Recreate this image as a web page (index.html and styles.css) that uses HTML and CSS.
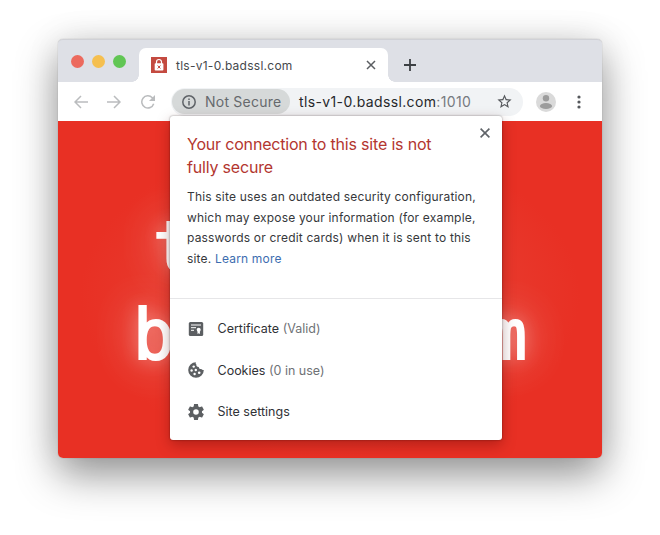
FILE: index.html
```html
<!DOCTYPE html>
<html lang="en">
<head>
<meta charset="utf-8">
<title>tls-v1-0.badssl.com</title>
<link rel="stylesheet" href="styles.css">
</head>
<body>
<div class="window">
  <div class="tabstrip">
    <div class="lights"><i class="red"></i><i class="yellow"></i><i class="green"></i></div>
    <div class="tab">
      <svg class="favicon" viewBox="0 0 16 16" width="16" height="16"><rect width="16" height="16" fill="#c44a40"/><path d="M5.5 7V5a2.5 2.5 0 0 1 5 0v2" fill="none" stroke="#fff" stroke-width="1.2"/><rect x="3.7" y="6.3" width="8.7" height="7.2" rx=".8" fill="#fff"/><path d="M6.7 8.5l2.7 3M9.4 8.5l-2.7 3" stroke="#c44a40" stroke-width="1"/></svg>
      <span class="tab-title">tls-v1-0.badssl.com</span>
      <svg class="tab-close" viewBox="0 0 10 10" width="10" height="10"><path d="M1 1l8 8M9 1L1 9" stroke="#5a5d61" stroke-width="1.5"/></svg>
    </div>
    <svg class="new-tab" viewBox="0 0 12 12" width="12" height="12"><path d="M6 0v12M0 6h12" stroke="#3c4043" stroke-width="1.8"/></svg>
  </div>
  <div class="toolbar">
    <svg class="back" viewBox="0 0 14 14" width="14" height="14"><path d="M14 7H1.3M7 1L1 7l6 6" fill="none" stroke="#babcbe" stroke-width="1.5"/></svg>
    <svg class="forward" viewBox="0 0 14 14" width="14" height="14"><path d="M0 7h12.700M7 1l6 6-6 6" fill="none" stroke="#babcbe" stroke-width="1.5"/></svg>
    <svg class="reload" viewBox="0 0 14 14" width="14" height="14"><path d="M12.700 8.800A6.100 6.100 0 1 1 11.300 2.700L12.500 4" fill="none" stroke="#babcbe" stroke-width="1.5"/><path d="M14 0v6H8z" fill="#babcbe"/></svg>
    <div class="omnibox">
      <div class="chip">
        <svg viewBox="0 0 14 14" width="14" height="14"><circle cx="7" cy="7" r="6.200" fill="none" stroke="#5f6368" stroke-width="1.500"/><path d="M7 6v4.500M7 3.400v1.600" stroke="#5f6368" stroke-width="1.500"/></svg>
        <span>Not Secure</span>
      </div>
      <span class="url">tls-v1-0.badssl.com<span class="port">:1010</span></span>
      <svg class="star" viewBox="0 0 24 24" width="17" height="17"><path fill="#55585c" d="M22 9.240l-7.190-.62L12 2 9.190 8.630 2 9.240l5.460 4.730L5.820 21 12 17.270 18.180 21l-1.630-7.030L22 9.240zM12 15.400l-3.760 2.270 1-4.280-3.320-2.880 4.380-.38L12 6.100l1.710 4.040 4.380.38-3.320 2.880 1 4.280L12 15.400z"/></svg>
    </div>
    <svg class="avatar" viewBox="0 0 20 20" width="20" height="20"><circle cx="10" cy="10" r="10" fill="#dadada"/><circle cx="10" cy="6.200" r="3.200" fill="#9c9c9c"/><ellipse cx="10" cy="14" rx="6.100" ry="3" fill="#9c9c9c"/></svg>
    <svg class="menu" viewBox="0 0 4 14" width="4" height="14"><g fill="#55585c"><circle cx="2" cy="2" r="1.600"/><circle cx="2" cy="7" r="1.600"/><circle cx="2" cy="12" r="1.600"/></g></svg>
  </div>
  <div class="page">
    <div class="headline first"><span>t</span></div>
    <div class="headline"><span>b</span><span>m</span></div>
  </div>

  <div class="popup">
    <svg class="popup-close" viewBox="0 0 10 10" width="10" height="10"><path d="M.6.6l8.800 8.800M9.400.6L.6 9.400" stroke="#5f6368" stroke-width="1.600"/></svg>
    <div class="summary">
      <h1>Your connection to this site is not<br>fully secure</h1>
      <p>This site uses an outdated security configuration,<br>which may expose your information (for example,<br>passwords or credit cards) when it is sent to this<br>site. <a>Learn more</a></p>
    </div>
    <div class="rows">
      <div class="row"><svg viewBox="0 0 16 16" width="16" height="16"><rect x=".8" y="1" width="14.400" height="14" rx="1.500" fill="#5c5f62"/><path d="M3 4h10M3 6.700h5M3 9.300h3" stroke="#fff" stroke-width="1"/><circle cx="10.700" cy="8.700" r="2" fill="#fff"/><path d="M9.500 9.500h2.400v3.600l-1.200-.9-1.200.9z" fill="#fff"/></svg><span>Certificate <em>(Valid)</em></span></div>
      <div class="row"><svg viewBox="0 0 16 16" width="16" height="16"><path d="M8 .2A7.800 7.800 0 1 0 15.800 8c-1 .3-2-.1-2.500-1-1.400.3-2.600-.7-2.500-2.100C9.200 5 8 3.800 8.400 2.400 7.600 1.900 7.500 1 8 .2z" fill="#5c5f62"/><g fill="#fff"><circle cx="5.700" cy="4.600" r="1.200"/><circle cx="3.600" cy="8.500" r="1.200"/><circle cx="7.800" cy="8" r="1.200"/><circle cx="6.600" cy="12" r="1.200"/><circle cx="11.200" cy="10.800" r="1.300"/></g></svg><span>Cookies <em>(0 in use)</em></span></div>
      <div class="row"><svg viewBox="2 2 20 20" width="16" height="16"><path fill="#5c5f62" d="M19.430 12.980c.04-.32.07-.64.07-.98s-.03-.66-.07-.98l2.110-1.650c.19-.15.24-.42.12-.64l-2-3.460c-.12-.22-.39-.3-.61-.22l-2.490 1c-.52-.4-1.080-.73-1.690-.98l-.38-2.650C14.460 2.180 14.250 2 14 2h-4c-.25 0-.46.18-.49.42l-.38 2.650c-.61.25-1.170.59-1.690.98l-2.490-1c-.23-.09-.49 0-.61.22l-2 3.460c-.13.22-.07.49.12.64l2.110 1.650c-.04.32-.07.65-.07.98s.03.66.07.98l-2.110 1.650c-.19.15-.24.42-.12.64l2 3.460c.12.22.39.3.61.22l2.490-1c.52.4 1.080.73 1.690.98l.38 2.650c.03.24.24.42.49.42h4c.25 0 .46-.18.49-.42l.38-2.650c.61-.25 1.170-.59 1.690-.98l2.490 1c.23.09.49 0 .61-.22l2-3.460c.12-.22.07-.49-.12-.64l-2.110-1.650zM12 15.500a3.500 3.500 0 1 1 0-7 3.500 3.500 0 0 1 0 7z"/></svg><span>Site settings</span></div>
    </div>
  </div>
</div>
</body>
</html>
```
FILE: styles.css
```css
* { box-sizing: border-box; }
body { margin: 0; height: 535px; overflow: hidden; background: #fff; font-family: Inter, sans-serif; padding: 39px 58px; }
svg { display: block; flex: none; }
.window { position: relative; width: 544px; height: 419px; border-radius: 5px; display: flex; flex-direction: column; box-shadow: 0 0 1px rgba(0,0,0,.4), 0 17px 42px rgba(0,0,0,.41), 0 0 36px rgba(0,0,0,.08); }
.tabstrip { height: 43px; flex: none; background: #dee0e6; border-radius: 5px 5px 0 0; border-top: 1px solid #d0d1d6; display: flex; align-items: flex-end; }
.lights { display: flex; gap: 8px; width: 81px; padding-left: 13px; align-self: center; }
.lights i { width: 13px; height: 13px; border-radius: 50%; }
.red { background: #ec6a5e; }
.yellow { background: #f5bf4f; }
.green { background: #61c654; }
.tab { position: relative; width: 249px; height: 34px; background: #fff; border-radius: 7px 7px 0 0; display: flex; align-items: center; padding: 0 12px; }
.tab::before, .tab::after { content: ""; position: absolute; bottom: 0; width: 7px; height: 7px; }
.tab::before { left: -7px; background: radial-gradient(circle at 0 0, transparent 6.500px, #fff 7px); }
.tab::after { right: -7px; background: radial-gradient(circle at 100% 0, transparent 6.500px, #fff 7px); }
.tab-title { margin-left: 9px; font-size: 12px; color: #45484c; letter-spacing: .26px; white-space: nowrap; }
.tab-close { margin-left: auto; }
.new-tab { margin: 0 0 11px 16px; }
.toolbar { height: 39px; flex: none; background: #fff; display: flex; align-items: center; padding-left: 16px; }
.forward { margin-left: 19px; }
.reload { margin-left: 19.500px; }
.omnibox { margin-left: 16.500px; width: 352px; height: 28px; border-radius: 14px; background: #f1f3f5; display: flex; align-items: center; }
.chip { margin-left: 1px; width: 118px; height: 25px; border-radius: 13px; background: #d6d9d9; display: flex; align-items: center; padding-left: 10px; gap: 9px; font-size: 14px; letter-spacing: .22px; color: #66696d; white-space: nowrap; }
.url { margin-left: 9px; font-size: 14px; letter-spacing: .37px; color: #26282b; white-space: nowrap; }
.port { color: #777a7f; }
.star { margin-left: auto; margin-right: 10px; }
.avatar { margin-left: 13px; }
.menu { margin-left: 21px; }
.page { flex: 1; overflow: hidden; background: radial-gradient(ellipse 250px 160px at 50% 52%, #e84b40 0, #e83b2e 60%, #e83024 100%); border-radius: 0 0 5px 5px; padding: 82px 75px 0; }
.headline { display: flex; justify-content: space-between; font: 69px/88px "DejaVu Sans Mono", monospace; -webkit-text-stroke: 2px #fff; color: #fff; text-shadow: 0 0 18px rgba(255,255,255,.4), 0 0 44px rgba(255,255,255,.65); }
.first { padding-left: 20px; }
.popup { position: absolute; left: 112px; top: 77px; width: 331.500px; height: 324px; background: #fff; border-radius: 3px; box-shadow: 0 0 2px rgba(0,0,0,.45), 0 5px 14px rgba(80,0,0,.34); display: flex; flex-direction: column; }
.popup-close { position: absolute; right: 11.500px; top: 12px; }
.summary { height: 183px; padding: 17px 17px 0; border-bottom: 1px solid #e6e6e8; white-space: nowrap; }
h1 { margin: 0; font-size: 16px; line-height: 23px; font-weight: 400; letter-spacing: -.19px; color: #b33630; }
p { margin: 8px 0 0; font-size: 12px; line-height: 20.700px; letter-spacing: .18px; color: #36383b; }
a { color: #3d6db0; }
.rows { padding-top: 9px; }
.row { height: 41.500px; display: flex; align-items: center; padding-left: 17.500px; gap: 14px; font-size: 12.500px; color: #303236; }
em { font-style: normal; color: #6f7276; }
```
